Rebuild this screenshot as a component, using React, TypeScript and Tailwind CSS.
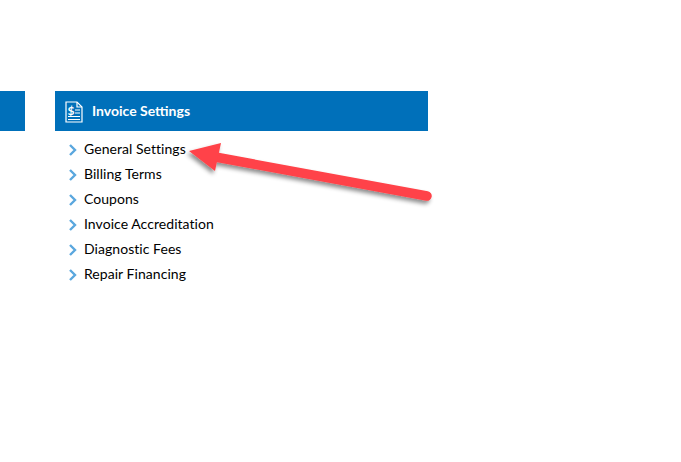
const items = [
  'General Settings',
  'Billing Terms',
  'Coupons',
  'Invoice Accreditation',
  'Diagnostic Fees',
  'Repair Financing',
]

function Chevron() {
  return (
    <svg width="8" height="12" viewBox="0 0 8 12" className="mt-[2px] shrink-0">
      <path d="M1 1 L6 6 L1 11" fill="none" stroke="#5aa7de" strokeWidth="2.4" />
    </svg>
  )
}

function InvoiceIcon() {
  return (
    <svg width="18" height="22" viewBox="0 0 18 22" fill="none" stroke="white" strokeWidth="1.2" className="mt-[1px] shrink-0">
      <path d="M1 1 H12 L17 6 V21 H1 Z" />
      <path d="M12 1 V6 H17" />
      <path d="M10 9 H15 M10 12 H15 M3 15.5 H15 M3 18.5 H15" />
      <text x="2.5" y="13.5" fontSize="12" fontWeight="700" fill="white" stroke="none" fontFamily="Lato, sans-serif">$</text>
    </svg>
  )
}

export default function App() {
  return (
    <div className="relative h-[462px] w-[681px] overflow-hidden bg-white font-['Lato',sans-serif]">
      <div className="flex gap-[30px] pt-[91px]">
        <div className="h-10 w-[25px] bg-[#0070ba]" />
        <div className="w-[373px]">
          <div className="flex h-10 items-center gap-[9px] bg-[#0070ba] pl-[10px]">
            <InvoiceIcon />
            <span className="mb-[1px] text-[14px] font-bold text-white">Invoice Settings</span>
          </div>
          <ul className="mt-[5px]">
            {items.map((item) => (
              <li key={item} className="flex h-[25px] items-center gap-[7px] pl-[14px] text-[14px] tracking-[0.05px] text-black">
                <Chevron />
                {item}
              </li>
            ))}
          </ul>
        </div>
      </div>
      <svg width="681" height="462" className="absolute left-0 top-0">
        <defs>
          <filter id="arrowShadow" x="-10%" y="-30%" width="120%" height="170%">
            <feDropShadow dx="-2" dy="3" stdDeviation="2" floodColor="#000" floodOpacity="0.45" />
          </filter>
        </defs>
        <g filter="url(#arrowShadow)">
          <path d="M218 157.5 L427 196" stroke="#ff4348" strokeWidth="9.5" strokeLinecap="round" fill="none" />
          <path d="M189 151 L221 143 L215 171 Z" fill="#ff4348" />
        </g>
      </svg>
    </div>
  )
}
